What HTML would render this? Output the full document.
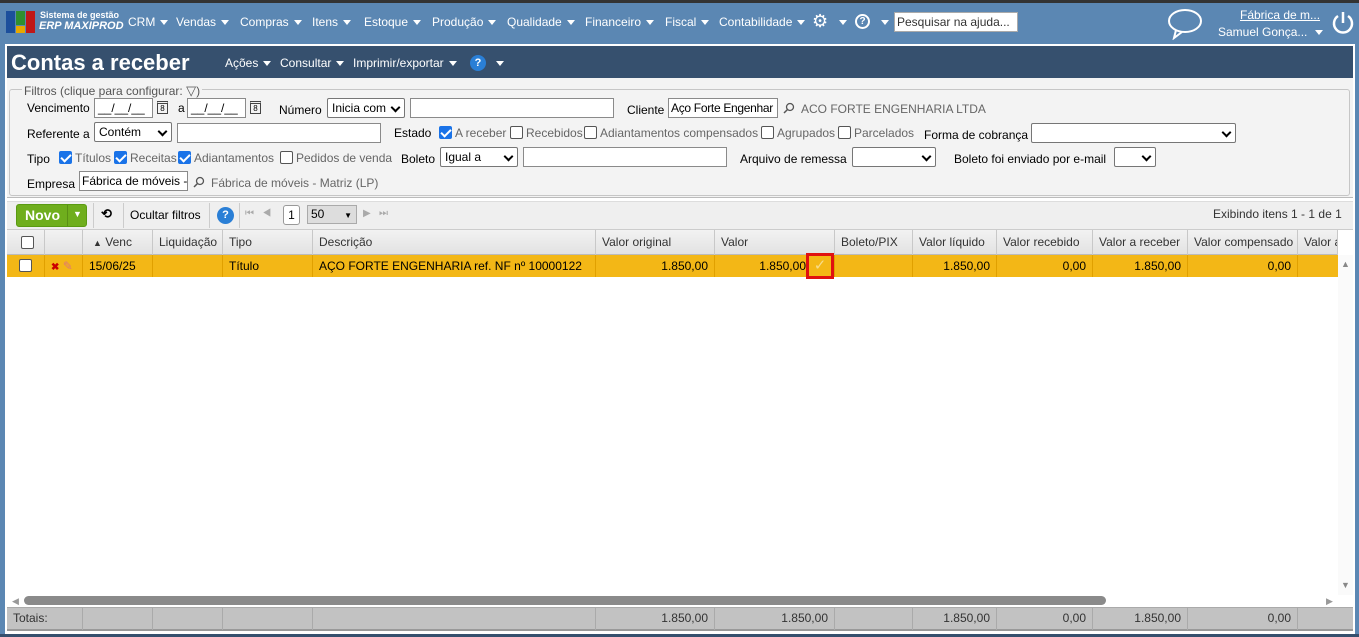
<!DOCTYPE html>
<html><head><meta charset="utf-8"><style>
*{box-sizing:border-box;margin:0;padding:0}
body{width:1359px;height:637px;overflow:hidden;background:#5b87b3;font-family:"Liberation Sans",sans-serif;font-size:12px;color:#000;position:relative}
.a{position:absolute;white-space:nowrap}
.nav{color:#fff;font-size:12px;top:15px}
.tri{display:inline-block;width:0;height:0;border-left:4px solid transparent;border-right:4px solid transparent;border-top:5px solid currentColor;vertical-align:middle;margin-left:5px}
.inp{position:absolute;background:#fff;border:1px solid #8a8a8a;height:20px;font-size:12px;padding:1px 3px;line-height:16px;white-space:nowrap;overflow:hidden}
.sel{position:absolute;background:#fff;border:1px solid #767676;border-radius:2px;height:20px;font-size:12px;padding:1px 4px;line-height:16px;white-space:nowrap}
.sel:after{content:"";position:absolute;right:5px;top:5px;width:5px;height:5px;border-right:2px solid #000;border-bottom:2px solid #000;transform:rotate(45deg)}
.cb{position:absolute;width:13px;height:13px;border:1px solid #555;border-radius:2px;background:#fff}
.cb.on{background:#1a73e8;border-color:#1a73e8}
.cb.on:after{content:"";position:absolute;left:3px;top:0px;width:4px;height:8px;border-right:2px solid #fff;border-bottom:2px solid #fff;transform:rotate(45deg)}
.g{color:#666}
.cal{position:absolute;width:11px;height:13px;border:1px solid #444;font-size:8px;text-align:center;line-height:10px;border-top-width:3px;border-top-style:double}
.th{position:absolute;top:230px;height:25px;border-right:1px solid #c8c8c8;line-height:24px;padding-left:6px;color:#333;white-space:nowrap;overflow:hidden}
.td{position:absolute;top:255px;height:22px;border-right:1px solid #e0a000;line-height:22px;padding:0 6px;white-space:nowrap}
.tt{position:absolute;top:607px;height:23px;border-right:1px solid #aaa;line-height:23px;padding:0 6px;color:#333;text-align:right}
</style></head><body>
<div class="a" style="left:0;top:0;width:1359px;height:3px;background:#333"></div>
<div class="a" style="left:6px;top:11px;width:9px;height:22px;background:#1c4f9c"></div>
<div class="a" style="left:16px;top:11px;width:9px;height:14px;background:#2f8f2f"></div>
<div class="a" style="left:16px;top:26px;width:9px;height:7px;background:#e8a800"></div>
<div class="a" style="left:26px;top:11px;width:9px;height:22px;background:#c01818"></div>
<div class="a" style="left:40px;top:10px;color:#fff;font-size:9px;font-weight:bold">Sistema de gestão</div>
<div class="a" style="left:39px;top:20px;color:#fff;font-size:11px;font-weight:bold;font-style:italic">ERP MAXIPROD</div>
<div class="a nav" style="left:128px">CRM<span class="tri"></span></div>
<div class="a nav" style="left:176px">Vendas<span class="tri"></span></div>
<div class="a nav" style="left:240px">Compras<span class="tri"></span></div>
<div class="a nav" style="left:312px">Itens<span class="tri"></span></div>
<div class="a nav" style="left:364px">Estoque<span class="tri"></span></div>
<div class="a nav" style="left:432px">Produção<span class="tri"></span></div>
<div class="a nav" style="left:507px">Qualidade<span class="tri"></span></div>
<div class="a nav" style="left:585px">Financeiro<span class="tri"></span></div>
<div class="a nav" style="left:665px">Fiscal<span class="tri"></span></div>
<div class="a nav" style="left:719px">Contabilidade<span class="tri"></span></div>
<div class="a" style="left:812px;top:11px;color:#fff;font-size:18px;line-height:20px">⚙</div>
<div class="a nav" style="left:834px"><span class="tri"></span></div>
<div class="a" style="left:855px;top:14px;width:15px;height:15px;border:2px solid #fff;border-radius:50%;color:#fff;font-size:10px;font-weight:bold;text-align:center;line-height:11px">?</div>
<div class="a nav" style="left:876px"><span class="tri"></span></div>
<div class="a" style="left:894px;top:12px;width:124px;height:20px;background:#fff;border:1px solid #aaa;font-size:12px;padding:2px 2px;color:#333">Pesquisar na ajuda...</div>
<svg class="a" style="left:1166px;top:8px" width="38" height="32"><ellipse cx="19" cy="13" rx="16" ry="11" fill="none" stroke="#fff" stroke-width="2"/><path d="M10 22 L8 30 L16 24" fill="none" stroke="#fff" stroke-width="2"/></svg>
<div class="a" style="left:1240px;top:8px;color:#fff;text-decoration:underline">Fábrica de m...</div>
<div class="a" style="left:1218px;top:25px;color:#fff">Samuel Gonça...<span class="tri" style="margin-left:8px"></span></div>
<svg class="a" style="left:1331px;top:10px" width="24" height="26"><path d="M7 6 A9 9 0 1 0 17 6" fill="none" stroke="#fff" stroke-width="2.5"/><line x1="12" y1="2" x2="12" y2="13" stroke="#fff" stroke-width="2.5"/></svg>
<div class="a" style="left:5px;top:44px;width:1350px;height:590px;background:#fff;border:2px solid #fff"></div>
<div class="a" style="left:7px;top:46px;width:1346px;height:32px;background:#36506e"></div>
<div class="a" style="left:11px;top:50px;color:#fff;font-size:22px;font-weight:bold">Contas a receber</div>
<div class="a" style="left:225px;top:56px;color:#fff">Ações<span class="tri"></span></div>
<div class="a" style="left:280px;top:56px;color:#fff">Consultar<span class="tri"></span></div>
<div class="a" style="left:353px;top:56px;color:#fff">Imprimir/exportar<span class="tri"></span></div>
<div class="a" style="left:470px;top:55px;width:16px;height:16px;border-radius:50%;background:#2a7fd6;color:#fff;font-size:11px;font-weight:bold;text-align:center;line-height:16px">?</div>
<div class="a" style="left:491px;top:56px;color:#fff"><span class="tri"></span></div>
<div class="a" style="left:7px;top:78px;width:1346px;height:120px;background:#f3f3f3;border-bottom:1px solid #bbb"></div>
<div class="a" style="left:9px;top:89px;width:1341px;height:107px;border:1px solid #c6c6c6;border-radius:3px"></div>
<div class="a" style="left:22px;top:83px;background:#f3f3f3;padding:0 2px;color:#555">Filtros (clique para configurar: <span style="font-size:13px">▽</span>)</div>
<div class="a" style="left:27px;top:101px">Vencimento</div>
<div class="inp" style="left:94px;top:98px;width:59px">__/__/__</div>
<div class="cal" style="left:157px;top:101px">8</div>
<div class="a" style="left:178px;top:101px">a</div>
<div class="inp" style="left:187px;top:98px;width:59px">__/__/__</div>
<div class="cal" style="left:250px;top:101px">8</div>
<div class="a" style="left:279px;top:103px">Número</div>
<div class="sel" style="left:327px;top:98px;width:78px">Inicia com</div>
<div class="inp" style="left:410px;top:98px;width:204px"></div>
<div class="a" style="left:627px;top:103px">Cliente</div>
<div class="inp" style="left:668px;top:98px;width:110px;padding:1px 2px;letter-spacing:-0.3px">Aço Forte Engenhar</div>
<svg class="a" style="left:783px;top:102px" width="12" height="12"><circle cx="7" cy="5" r="3.5" fill="none" stroke="#555" stroke-width="1.3"/><line x1="4.5" y1="7.5" x2="1" y2="11" stroke="#555" stroke-width="1.5"/></svg>
<div class="a g" style="left:801px;top:102px">ACO FORTE ENGENHARIA LTDA</div>
<div class="a" style="left:27px;top:127px">Referente a</div>
<div class="sel" style="left:94px;top:122px;width:78px">Contém</div>
<div class="inp" style="left:177px;top:123px;width:204px"></div>
<div class="a" style="left:394px;top:126px">Estado</div>
<div class="cb on" style="left:439px;top:126px"></div><div class="a g" style="left:455px;top:126px">A receber</div>
<div class="cb" style="left:510px;top:126px"></div><div class="a g" style="left:526px;top:126px">Recebidos</div>
<div class="cb" style="left:584px;top:126px"></div><div class="a g" style="left:600px;top:126px">Adiantamentos compensados</div>
<div class="cb" style="left:761px;top:126px"></div><div class="a g" style="left:777px;top:126px">Agrupados</div>
<div class="cb" style="left:838px;top:126px"></div><div class="a g" style="left:854px;top:126px">Parcelados</div>
<div class="a" style="left:924px;top:128px">Forma de cobrança</div>
<div class="sel" style="left:1031px;top:123px;width:205px"></div>
<div class="a" style="left:27px;top:152px">Tipo</div>
<div class="cb on" style="left:59px;top:151px"></div><div class="a g" style="left:75px;top:151px">Títulos</div>
<div class="cb on" style="left:114px;top:151px"></div><div class="a g" style="left:130px;top:151px">Receitas</div>
<div class="cb on" style="left:178px;top:151px"></div><div class="a g" style="left:194px;top:151px">Adiantamentos</div>
<div class="cb" style="left:280px;top:151px"></div><div class="a g" style="left:296px;top:151px">Pedidos de venda</div>
<div class="a" style="left:401px;top:152px">Boleto</div>
<div class="sel" style="left:440px;top:147px;width:78px">Igual a</div>
<div class="inp" style="left:523px;top:147px;width:204px"></div>
<div class="a" style="left:740px;top:152px">Arquivo de remessa</div>
<div class="sel" style="left:852px;top:147px;width:84px"></div>
<div class="a" style="left:954px;top:152px">Boleto foi enviado por e-mail</div>
<div class="sel" style="left:1114px;top:147px;width:42px"></div>
<div class="a" style="left:27px;top:177px">Empresa</div>
<div class="inp" style="left:79px;top:171px;width:109px;padding:1px 2px">Fábrica de móveis -</div>
<svg class="a" style="left:193px;top:176px" width="12" height="12"><circle cx="7" cy="5" r="3.5" fill="none" stroke="#555" stroke-width="1.3"/><line x1="4.5" y1="7.5" x2="1" y2="11" stroke="#555" stroke-width="1.5"/></svg>
<div class="a g" style="left:211px;top:176px">Fábrica de móveis - Matriz (LP)</div>
<div class="a" style="left:7px;top:201px;width:1346px;height:29px;background:#efefef;border-bottom:1px solid #ccc;border-top:1px solid #ddd"></div>
<div class="a" style="left:16px;top:204px;width:71px;height:23px;background:#6fae1d;border:1px solid #5a9a12;border-radius:3px"></div>
<div class="a" style="left:25px;top:207px;color:#fff;font-weight:bold;font-size:14px">Novo</div>
<div class="a" style="left:67px;top:205px;width:1px;height:21px;background:#5a9015"></div>
<div class="a" style="left:73px;top:209px;color:#fff;font-size:9px">▼</div>
<div class="a" style="left:93px;top:203px;width:1px;height:25px;background:#ccc"></div>
<div class="a" style="left:101px;top:206px;font-size:13px;font-weight:bold">⟲</div>
<div class="a" style="left:123px;top:203px;width:1px;height:25px;background:#ccc"></div>
<div class="a" style="left:130px;top:208px">Ocultar filtros</div>
<div class="a" style="left:209px;top:203px;width:1px;height:25px;background:#ccc"></div>
<div class="a" style="left:217px;top:207px;width:17px;height:17px;border-radius:50%;background:#2a7fd6;color:#fff;font-size:11px;font-weight:bold;text-align:center;line-height:17px">?</div>
<div class="a" style="left:239px;top:203px;width:1px;height:25px;background:#ccc"></div>
<div class="a" style="left:245px;top:208px;color:#aaa;font-size:10px">⏮&nbsp;&nbsp;&nbsp;◀</div>
<div class="a" style="left:283px;top:205px;width:17px;height:20px;border:1px solid #999;border-radius:3px;background:#fff;text-align:center;line-height:18px">1</div>
<div class="a" style="left:307px;top:205px;width:50px;height:19px;border:1px solid #aaa;background:#ddd;padding:1px 3px">50<span style="position:absolute;right:4px;top:5px;font-size:8px">▼</span></div>
<div class="a" style="left:363px;top:208px;color:#aaa;font-size:10px">▶&nbsp;&nbsp;&nbsp;⏭</div>
<div class="a" style="left:1213px;top:207px;color:#333">Exibindo itens 1 - 1 de 1</div>
<div class="a" style="left:7px;top:230px;width:1331px;height:25px;background:linear-gradient(#f2f2f2,#e2e2e2);border-bottom:1px solid #bbb"></div>
<div class="th" style="left:7px;width:38px"><div class="cb" style="left:14px;top:6px"></div></div>
<div class="th" style="left:45px;width:38px"></div>
<div class="th" style="left:83px;width:70px;padding-left:10px"><span style="font-size:9px">▲</span> Venc</div>
<div class="th" style="left:153px;width:70px">Liquidação</div>
<div class="th" style="left:223px;width:90px">Tipo</div>
<div class="th" style="left:313px;width:283px">Descrição</div>
<div class="th" style="left:596px;width:119px">Valor original</div>
<div class="th" style="left:715px;width:120px">Valor</div>
<div class="th" style="left:835px;width:78px">Boleto/PIX</div>
<div class="th" style="left:913px;width:84px">Valor líquido</div>
<div class="th" style="left:997px;width:96px">Valor recebido</div>
<div class="th" style="left:1093px;width:95px">Valor a receber</div>
<div class="th" style="left:1188px;width:110px">Valor compensado</div>
<div class="th" style="left:1298px;width:40px">Valor a</div>
<div class="a" style="left:7px;top:255px;width:1331px;height:22px;background:#f3b716"></div>
<div class="td" style="left:7px;width:38px"><div class="cb" style="left:12px;top:4px"></div></div>
<div class="td" style="left:45px;width:38px"><span style="color:#c00;font-size:10px;font-weight:bold">✖</span> <span style="color:#d77">✎</span></div>
<div class="td" style="left:83px;width:70px">15/06/25</div>
<div class="td" style="left:153px;width:70px"></div>
<div class="td" style="left:223px;width:90px">Título</div>
<div class="td" style="left:313px;width:283px">AÇO FORTE ENGENHARIA ref. NF nº 10000122</div>
<div class="td" style="left:596px;width:119px;text-align:right">1.850,00</div>
<div class="td" style="left:715px;width:120px;text-align:right;padding-right:28px">1.850,00</div>
<div class="a" style="left:806px;top:253px;width:28px;height:26px;border:3px solid #e01010;color:#f7dc8a;font-size:15px;text-align:center;line-height:20px">✓</div>
<div class="td" style="left:835px;width:78px"></div>
<div class="td" style="left:913px;width:84px;text-align:right">1.850,00</div>
<div class="td" style="left:997px;width:96px;text-align:right">0,00</div>
<div class="td" style="left:1093px;width:95px;text-align:right">1.850,00</div>
<div class="td" style="left:1188px;width:110px;text-align:right">0,00</div>
<div class="a" style="left:1338px;top:255px;width:15px;height:340px;background:#fafafa"></div>
<div class="a" style="left:1341px;top:259px;color:#888;font-size:9px">▲</div>
<div class="a" style="left:1341px;top:580px;color:#888;font-size:9px">▼</div>
<div class="a" style="left:12px;top:596px;color:#999;font-size:9px">◀</div>
<div class="a" style="left:24px;top:596px;width:1082px;height:9px;border-radius:5px;background:#8a8a8a"></div>
<div class="a" style="left:1326px;top:596px;color:#999;font-size:9px">▶</div>
<div class="a" style="left:7px;top:607px;width:1346px;height:24px;background:#c2c2c2;border-top:1px solid #aaa;border-bottom:2px solid #999"></div>
<div class="tt" style="left:7px;width:76px;text-align:left">Totais:</div>
<div class="tt" style="left:83px;width:70px"></div>
<div class="tt" style="left:153px;width:70px"></div>
<div class="tt" style="left:223px;width:90px"></div>
<div class="tt" style="left:313px;width:283px"></div>
<div class="tt" style="left:596px;width:119px">1.850,00</div>
<div class="tt" style="left:715px;width:120px">1.850,00</div>
<div class="tt" style="left:835px;width:78px"></div>
<div class="tt" style="left:913px;width:84px">1.850,00</div>
<div class="tt" style="left:997px;width:96px">0,00</div>
<div class="tt" style="left:1093px;width:95px">1.850,00</div>
<div class="tt" style="left:1188px;width:110px">0,00</div>
<div class="a" style="left:0;top:634px;width:1359px;height:3px;background:#36506e"></div>
</body></html>
